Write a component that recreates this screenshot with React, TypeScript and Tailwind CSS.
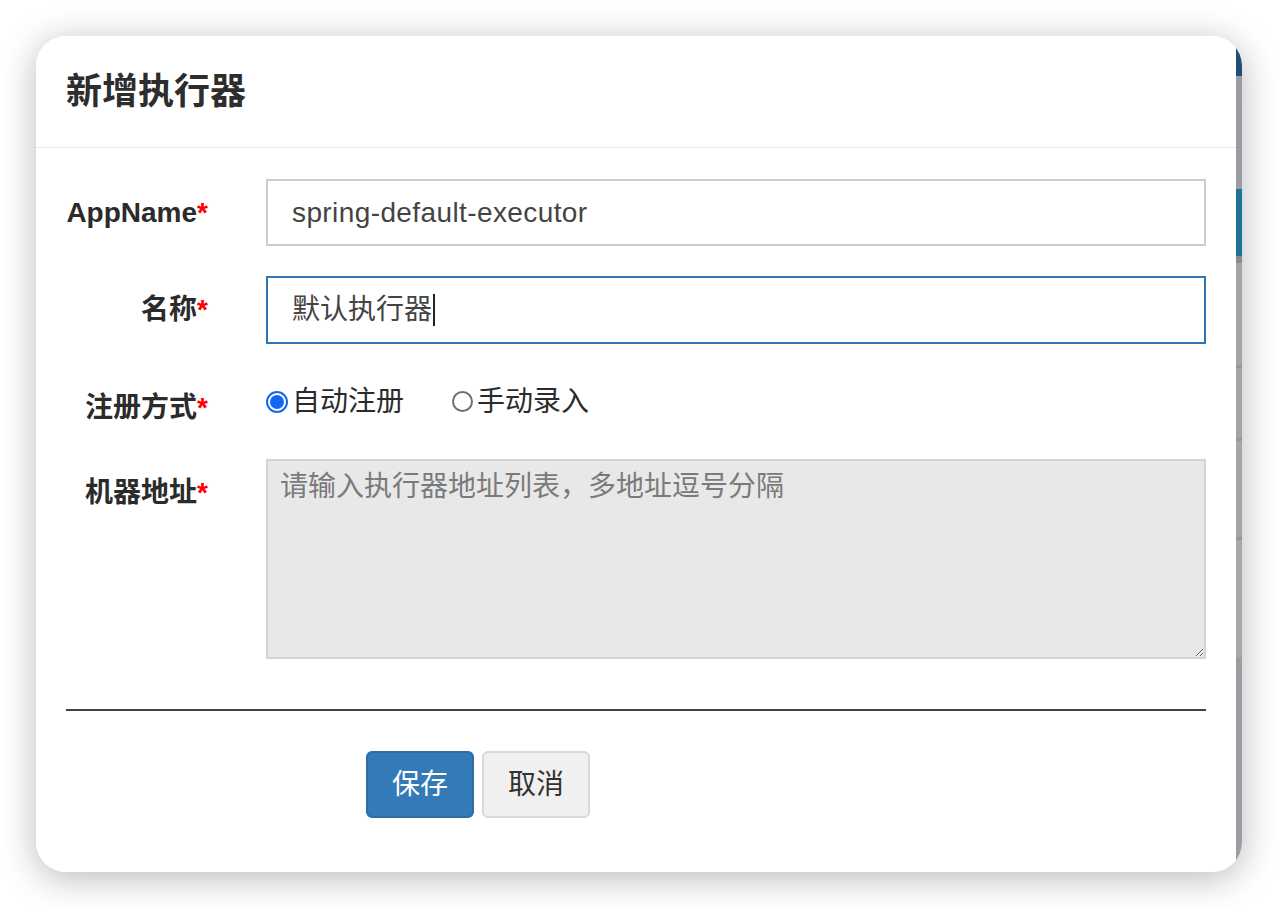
const FONT = '"Liberation Sans", "Noto Sans CJK SC", sans-serif'

function Label({ text }: { text: string }) {
  return (
    <label className="w-[142px] shrink-0 pt-[14px] text-right text-[28px] font-bold leading-[40px] text-[#2b2b2b]">
      {text}
      <span className="text-[#ff0000]">*</span>
    </label>
  )
}

function Radio({ checked, text }: { checked: boolean; text: string }) {
  return (
    <div className="flex h-[40px] items-center">
      {checked ? (
        <div className="flex h-[22px] w-[22px] shrink-0 items-center justify-center rounded-full border-2 border-[#1466f5] bg-white">
          <div className="h-[14px] w-[14px] rounded-full bg-[#1466f5]" />
        </div>
      ) : (
        <div className="ml-[1px] h-[21px] w-[21px] shrink-0 rounded-full border-2 border-[#707070] bg-white" />
      )}
      <div className="ml-[4px] h-[40px] text-[28px] leading-[40px] text-[#2b2b2b]">{text}</div>
    </div>
  )
}

export default function App() {
  return (
    <div className="min-h-screen bg-white pl-[36px] pt-[36px]" style={{ fontFamily: FONT }}>
      <div className="flex h-[836px] w-[1206px] overflow-hidden rounded-[30px] shadow-[0_6px_36px_rgba(0,0,0,0.28)]">
        <div className="flex flex-1 flex-col bg-white">
          {/* header */}
          <div className="flex h-[112px] items-center border-b border-[#e8e8e8] px-[30px]">
            <h4 className="text-[36px] font-bold text-[#2d2d2d]">新增执行器</h4>
          </div>

          {/* body */}
          <div className="px-[30px] pt-[31px]">
            <div className="flex">
              <Label text="AppName" />
              <div className="ml-[58px] flex h-[67px] w-[940px] items-center border-2 border-[#c9cdd6] px-[24px] text-[28px] tracking-[0.4px] text-[#444]">
                spring-default-executor
              </div>
            </div>

            <div className="mt-[30px] flex">
              <Label text="名称" />
              <div className="ml-[58px] flex h-[68px] w-[940px] items-center border-2 border-[#2f75b2] px-[24px] text-[28px] text-[#444]">
                默认执行器
                <span className="ml-[1px] inline-block h-[32px] w-[2px] bg-[#222]" />
              </div>
            </div>

            <div className="mt-[30px] flex">
              <Label text="注册方式" />
              <div className="ml-[58px] flex items-center gap-[47px] pt-[1px]">
                <Radio checked text="自动注册" />
                <Radio checked={false} text="手动录入" />
              </div>
            </div>

            <div className="mt-[31px] flex">
              <Label text="机器地址" />
              <textarea
                className="ml-[58px] h-[200px] w-[940px] border-2 border-[#d4d4d4] bg-[#e8e8e8] px-[12px] pt-[6px] text-[28px] leading-[40px] text-[#444] outline-none placeholder:text-[#7a7a7a]"
                style={{ fontFamily: FONT }}
                placeholder="请输入执行器地址列表，多地址逗号分隔"
              />
            </div>

            <div className="mt-[50px] h-[2px] bg-[#444]" />

            <div className="mt-[40px] flex gap-[8px] pl-[300px]">
              <button className="h-[67px] w-[108px] rounded-[6px] border-2 border-[#2e6da4] bg-[#337ab7] text-[28px] text-white">
                保存
              </button>
              <button className="h-[67px] w-[108px] rounded-[6px] border-2 border-[#d9d9d9] bg-[#f0f0f0] text-[28px] text-[#333]">
                取消
              </button>
            </div>
          </div>
        </div>

        {/* sliver of the page behind the modal */}
        <div className="flex w-[6px] flex-col">
          <div className="h-[40px] bg-[#1f4d78]" />
          <div className="h-[113px] bg-[#9b9ca1]" />
          <div className="h-[67px] bg-[#1a7399]" />
          <div className="h-[7px] bg-[#8a8a8e]" />
          <div className="h-[102px] bg-[#a4a4a4]" />
          <div className="h-[3px] bg-[#979797]" />
          <div className="h-[70px] bg-[#a3a3a3]" />
          <div className="h-[3px] bg-[#979797]" />
          <div className="h-[96px] bg-[#a5a5a5]" />
          <div className="h-[3px] bg-[#979797]" />
          <div className="h-[117px] bg-[#a8a8a8]" />
          <div className="flex-1 bg-[#9c9ca2]" />
        </div>
      </div>
    </div>
  )
}
